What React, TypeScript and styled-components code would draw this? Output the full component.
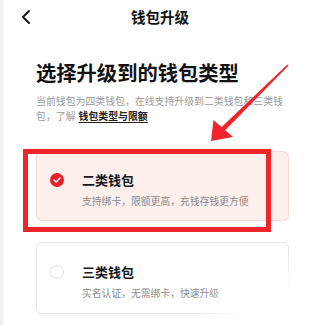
import React from "react";
import styled, { createGlobalStyle } from "styled-components";

const Global = createGlobalStyle`
  html, body { margin: 0; padding: 0; background: #fff; }
  body { font-family: "Noto Sans CJK SC", "Noto Sans", sans-serif; }
`;

const Page = styled.div`
  position: relative;
  width: 320px;
  height: 325px;
  overflow: hidden;
  background: #fff;
  box-sizing: border-box;
  border-left: 3px solid #efefef;
`;

const NavBar = styled.div`
  display: grid;
  grid-template-columns: 1fr auto 1fr;
  align-items: center;
  height: 34px;
  padding-left: 18px;
  padding-right: 21px;
`;

const BackButton = styled.div`
  display: flex;
  align-items: center;
  justify-self: start;
  width: 10px;
  height: 14px;
`;

const NavTitle = styled.div`
  font-size: 14.5px;
  font-weight: 700;
  color: #111;
  line-height: 20px;
`;

const Content = styled.div`
  padding-left: 33px;
  padding-right: 31px;
`;

const Heading = styled.h1`
  margin: 24px 0 0;
  font-size: 20.3px;
  line-height: 28px;
  font-weight: 700;
  color: #111;
`;

const Sub = styled.p`
  margin: 8px 0 0;
  font-size: 9.9px;
  line-height: 15px;
  color: #9a9a9a;
  width: 250px;
`;

const Link = styled.span`
  display: inline-block;
  line-height: 15px;
  vertical-align: top;
  color: #222;
  font-weight: 700;
  text-decoration: underline;
  text-underline-offset: 2px;
  margin-left: 3px;
`;

const CardList = styled.div`
  display: flex;
  flex-direction: column;
  gap: 21px;
  margin-top: 27px;
`;

const Card = styled.div<{ $active?: boolean }>`
  display: grid;
  grid-template-columns: 14px 1fr;
  column-gap: 18px;
  align-items: center;
  align-content: start;
  box-sizing: border-box;
  height: ${(p) => (p.$active ? 70 : 72)}px;
  padding: ${(p) => (p.$active ? 19 : 20)}px 12px 0 13px;
  border-radius: 6px;
  border: 1px solid ${(p) => (p.$active ? "#efdcd8" : "#e6e6e6")};
  background: ${(p) => (p.$active ? "#fdefec" : "#fff")};
`;

const Radio = styled.div<{ $checked?: boolean }>`
  width: 14px;
  height: 14px;
  border-radius: 50%;
  box-sizing: border-box;
  display: flex;
  align-items: center;
  justify-content: center;
  background: ${(p) => (p.$checked ? "#e3202a" : "#fff")};
  border: ${(p) => (p.$checked ? "none" : "1.5px solid #dedede")};
`;

const CardTitle = styled.div`
  font-size: 13px;
  font-weight: 700;
  line-height: 18px;
  color: #161616;
`;

const CardDesc = styled.div`
  grid-column: 2;
  margin-top: 5px;
  font-size: 9.8px;
  line-height: 14px;
  color: #8a8a8a;
  white-space: nowrap;
`;

const Annotation = styled.div`
  position: absolute;
  left: 20px;
  top: 149px;
  width: 248px;
  height: 83px;
  box-sizing: border-box;
  border: 5px solid #f0252b;
  pointer-events: none;
`;

const ArrowLayer = styled.svg`
  position: absolute;
  left: -3px;
  top: 0;
  pointer-events: none;
`;

const Fade = styled.div`
  position: absolute;
  left: 195px;
  top: 258px;
  width: 160px;
  height: 100px;
  background: radial-gradient(
    ellipse at 65% 58%,
    rgba(255, 255, 255, 1) 28%,
    rgba(255, 255, 255, 0.85) 48%,
    rgba(255, 255, 255, 0) 70%
  );
  pointer-events: none;
`;

export default function App() {
  return (
    <>
      <Global />
      <Page>
        <NavBar>
          <BackButton>
            <svg width="10" height="14" viewBox="0 0 10 14">
              <path d="M8 1 L2 7 L8 13" fill="none" stroke="#111" strokeWidth="1.8" strokeLinecap="round" strokeLinejoin="round" />
            </svg>
          </BackButton>
          <NavTitle>钱包升级</NavTitle>
          <div />
        </NavBar>
        <Content>
          <Heading>选择升级到的钱包类型</Heading>
          <Sub>
            当前钱包为四类钱包，在线支持升级到二类钱包和三类钱包，了解
            <Link>钱包类型与限额</Link>
          </Sub>
          <CardList>
            <Card $active>
              <Radio $checked>
                <svg width="8" height="6" viewBox="0 0 8 6">
                  <path d="M1 3 L3.2 5 L7 1" fill="none" stroke="#fff" strokeWidth="1.5" strokeLinecap="round" strokeLinejoin="round" />
                </svg>
              </Radio>
              <CardTitle>二类钱包</CardTitle>
              <CardDesc>支持绑卡，限额更高，充钱存钱更方便</CardDesc>
            </Card>
            <Card>
              <Radio />
              <CardTitle>三类钱包</CardTitle>
              <CardDesc>实名认证，无需绑卡，快速升级</CardDesc>
            </Card>
          </CardList>
        </Content>
        <Fade />
        <Annotation />
        <ArrowLayer width="320" height="325" viewBox="0 0 320 325">
          <polygon points="288.6,65.6 287.4,64.4 220.3,128.2 223.7,131.8" fill="#f0252b" />
          <polygon points="211,141 213.5,120 233,137" fill="#f0252b" />
        </ArrowLayer>
      </Page>
    </>
  );
}
